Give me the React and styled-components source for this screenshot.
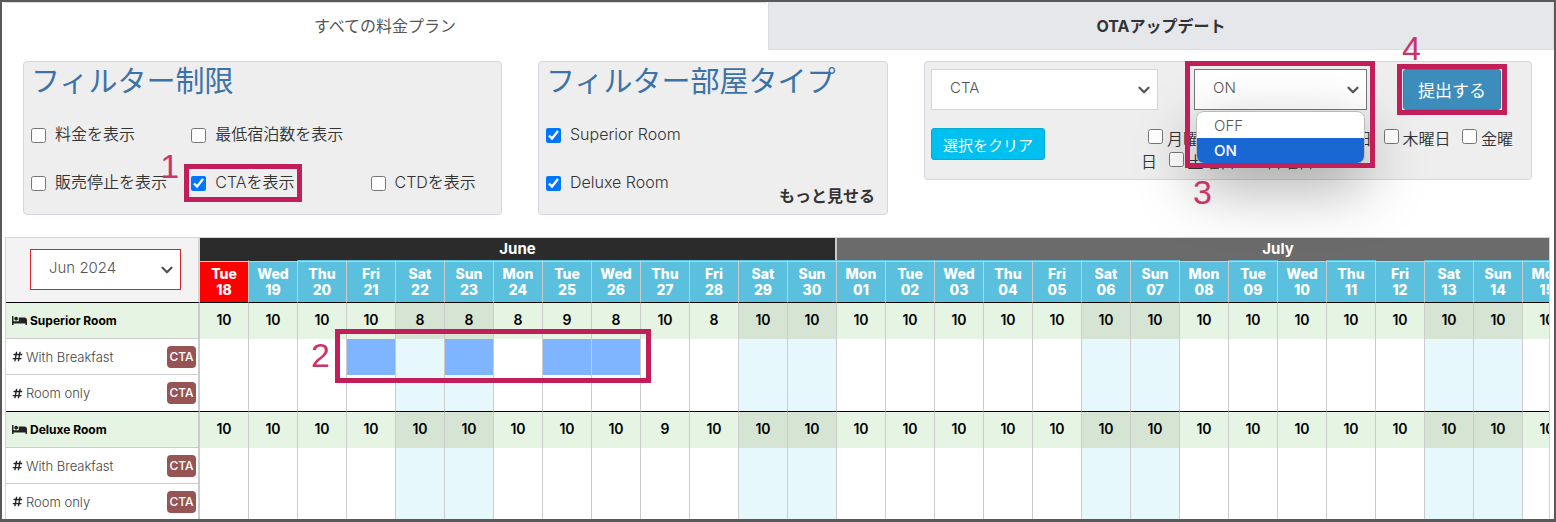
import React, { useState } from "react";
import styled, { createGlobalStyle, css } from "styled-components";
import { FaBed, FaHashtag } from "react-icons/fa";
import { ChevronDown } from "lucide-react";

const WEEKDAYS = ["Mon", "Tue", "Wed", "Thu", "Fri", "Sat", "Sun"];

// 18 Jun 2024 is a Tuesday
const days = Array.from({ length: 31 }, (_, i) => {
  const inJune = i < 13;
  const weekday = WEEKDAYS[(i + 1) % 7];
  return {
    id: i,
    weekday,
    month: inJune ? "June" : "July",
    date: String(inJune ? 18 + i : i - 12).padStart(2, "0"),
    weekend: weekday === "Sat" || weekday === "Sun",
    today: i === 0,
    flat: [0, 1, 20, 22, 24].includes(i),
  };
});

const rooms = [
  {
    name: "Superior Room",
    available: { 4: 8, 5: 8, 6: 8, 7: 9, 8: 8, 10: 8 },
    plans: [
      { name: "With Breakfast", selected: [3, 5, 7, 8], marked: true },
      { name: "Room only", selected: [] },
    ],
  },
  {
    name: "Deluxe Room",
    available: { 9: 9 },
    plans: [
      { name: "With Breakfast", selected: [] },
      { name: "Room only", selected: [] },
    ],
  },
];

const restrictions = [
  { id: "rate", label: "料金を表示" },
  { id: "minstay", label: "最低宿泊数を表示" },
  { id: "stop", label: "販売停止を表示", newRow: true },
  { id: "cta", label: "CTAを表示", checked: true },
  { id: "ctd", label: "CTDを表示" },
];

const weekdayFilters = [
  "月曜日",
  "火曜日",
  "水曜日",
  "木曜日",
  "金曜日",
  "土曜日",
  "日曜日",
];

function Marker({ number, ...rest }) {
  return (
    <MarkerBox aria-hidden="true" {...rest}>
      <span>{number}</span>
    </MarkerBox>
  );
}

function SelectField({ label, options, children, ...rest }) {
  return (
    <SelectWrap $grow={rest.$grow}>
      <Select aria-label={label} {...rest}>
        {options.map((option) => (
          <option key={option}>{option}</option>
        ))}
      </Select>
      <ChevronDown size={18} strokeWidth={3} />
      {children}
    </SelectWrap>
  );
}

function Option({ id, label, defaultChecked, children }) {
  return (
    <OptionCell>
      <OptionLabel htmlFor={id}>
        <input type="checkbox" id={id} defaultChecked={defaultChecked} />
        {label}
      </OptionLabel>
      {children}
    </OptionCell>
  );
}

function RateTable() {
  return (
    <TableWrap>
      <Table>
        <colgroup>
          <col className="names" />
          {days.map((day) => (
            <col key={day.id} className="day" />
          ))}
        </colgroup>
        <thead>
          <tr>
            <CornerCell rowSpan={2}>
              <SelectField
                label="month"
                options={["Jun 2024", "Jul 2024"]}
                $border="#d9232a"
              />
            </CornerCell>
            <MonthCell colSpan={13} $last>
              June
            </MonthCell>
            <MonthCell colSpan={18} $july>
              July
            </MonthCell>
          </tr>
          <tr>
            {days.map((day) => (
              <DayCell
                key={day.id}
                $today={day.today}
                $flat={day.flat}
                $july={day.month === "July"}
              >
                {day.weekday}
                <br />
                {day.date}
              </DayCell>
            ))}
          </tr>
        </thead>
        {rooms.map((room) => (
          <tbody key={room.name}>
            <tr>
              <NameCell $room>
                <NameRow>
                  <FaBed size={15} />
                  {room.name}
                </NameRow>
              </NameCell>
              {days.map((day) => (
                <CountCell key={day.id} $weekend={day.weekend}>
                  {room.available[day.id] || 10}
                </CountCell>
              ))}
            </tr>
            {room.plans.map((plan) => (
              <tr key={plan.name}>
                <NameCell>
                  <NameRow>
                    <FaHashtag size={11} />
                    {plan.name}
                    <Badge>CTA</Badge>
                  </NameRow>
                </NameCell>
                {days.map((day) => (
                  <PlanCell
                    key={day.id}
                    $weekend={day.weekend}
                    $selected={plan.selected.includes(day.id)}
                  >
                    {plan.marked && day.id === 3 && (
                      <Marker
                        number={2}
                        $inset="-10px calc(-500% - 16px) -8px -12px"
                        $left={-29}
                        $top={4}
                      />
                    )}
                  </PlanCell>
                ))}
              </tr>
            ))}
          </tbody>
        ))}
      </Table>
    </TableWrap>
  );
}

function App() {
  const [value, setValue] = useState("ON");

  return (
    <Frame>
      <GlobalStyle />
      <Tabs>
        <Tab type="button" $active>
          すべての料金プラン
        </Tab>
        <Tab type="button">OTAアップデート</Tab>
      </Tabs>

      <Filters>
        <Panel>
          <Title>フィルター制限</Title>
          <OptionGrid>
            {restrictions.map((item) => (
              <React.Fragment key={item.id}>
                {item.newRow && <span />}
                <Option
                  id={item.id}
                  label={item.label}
                  defaultChecked={item.checked}
                >
                  {item.checked && (
                    <Marker
                      number={1}
                      $inset="-7px -7px"
                      $left={-29}
                      $top={-20}
                    />
                  )}
                </Option>
              </React.Fragment>
            ))}
          </OptionGrid>
        </Panel>

        <Panel>
          <Title>フィルター部屋タイプ</Title>
          <RoomOptions>
            <RoomList>
              {rooms.map((room) => (
                <Option
                  key={room.name}
                  id={room.name}
                  label={room.name}
                  defaultChecked
                />
              ))}
            </RoomList>
            <MoreLink href="#more">もっと見せる</MoreLink>
          </RoomOptions>
        </Panel>

        <UpdatePanel>
          <UpdateRow>
            <SelectField
              label="restriction"
              options={["CTA", "CTD"]}
              $grow={227}
            />
            <SelectField
              label="value"
              options={["OFF", "ON"]}
              value={value}
              onChange={(e) => setValue(e.target.value)}
              $grow={173}
              $border="#767676"
            >
              <Menu role="listbox" aria-label="value options">
                {["OFF", "ON"].map((item) => (
                  <MenuItem
                    key={item}
                    role="option"
                    aria-selected={item === value}
                    $active={item === value}
                    onClick={() => setValue(item)}
                  >
                    {item}
                  </MenuItem>
                ))}
              </Menu>
              <Marker
                number={3}
                $inset="-8px -8px -58px -9px"
                $left={3}
                $top={109}
              />
            </SelectField>
            <SubmitWrap>
              <SubmitButton type="submit">提出する</SubmitButton>
              <Marker number={4} $inset="-5px -6px" $left={0} $top={-38} />
            </SubmitWrap>
          </UpdateRow>
          <ClearRow>
            <ClearButton type="button">選択をクリア</ClearButton>
            <DayFilters>
              {weekdayFilters.map((name) => (
                <React.Fragment key={name}>
                  <label>
                    <input type="checkbox" />
                    {name}
                  </label>{" "}
                </React.Fragment>
              ))}
            </DayFilters>
          </ClearRow>
        </UpdatePanel>
      </Filters>

      <RateTable />
    </Frame>
  );
}

const GlobalStyle = createGlobalStyle`
  * {
    box-sizing: border-box;
  }
  body {
    margin: 0;
    background: #fff;
    color: #333;
    font-family: Inter, "Noto Sans CJK JP", sans-serif;
    font-size: 16px;
    font-weight: 350;
  }
  button, select {
    font: inherit;
  }
  input[type="checkbox"] {
    width: 15px;
    height: 15px;
    margin: 0;
    flex-shrink: 0;
  }
`;

const Frame = styled.main`
  border: 2px solid #595959;
  border-bottom-width: 3px;
  overflow: hidden;
`;

const Tabs = styled.nav`
  display: grid;
  grid-template-columns: 766fr 786fr;
`;

const Tab = styled.button`
  height: 48px;
  padding: 0 0 2px;
  border: 1px solid #dcdce0;
  border-top-color: #e6e7eb;
  background: #e6e7eb;
  color: #333;
  font-weight: 700;
  ${({ $active }) =>
    $active &&
    css`
      border-color: #ddd transparent transparent;
      border-radius: 4px 4px 0 0;
      background: #fff;
      color: #555;
      font-weight: 400;
    `}
`;

const Filters = styled.section`
  display: grid;
  grid-template-columns: 479fr 350fr 608fr;
  gap: 36px;
  align-items: start;
  padding: 11px 22px 0 21px;
`;

const Panel = styled.div`
  padding: 0 7px 7px;
  border: 1px solid #d2d6de;
  border-radius: 4px;
  background: #eee;
`;

const Title = styled.h2`
  margin: 0 0 9px;
  color: #3d72a8;
  font-size: 29px;
  font-weight: 400;
  line-height: 40px;
`;

const OptionGrid = styled.div`
  display: grid;
  grid-template-columns: 161fr 180fr 124fr;

  > span {
    height: 48px;
  }
`;

const OptionCell = styled.div`
  position: relative;
  display: flex;
  justify-self: start;
  width: max-content;
  height: 24px;
  margin: 12px 0;
`;

const OptionLabel = styled.label`
  display: flex;
  align-items: center;
  gap: 9px;
  line-height: 20px;
  padding-bottom: 2px;
  white-space: nowrap;

  input {
    margin-top: 3px;
  }
`;

const RoomOptions = styled.div`
  display: flex;
  justify-content: space-between;
  align-items: flex-end;
`;

const RoomList = styled.div`
  display: flex;
  flex-direction: column;
`;

const MoreLink = styled.a`
  padding-right: 5px;
  color: #333;
  font-weight: 700;
  line-height: 22px;
  text-decoration: none;
`;

const UpdatePanel = styled(Panel)`
  padding: 7px 6px 5px;
`;

const UpdateRow = styled.div`
  display: flex;
  gap: 36px;
  padding-right: 24px;
`;

const SelectWrap = styled.div`
  position: relative;
  flex: ${({ $grow }) => $grow || 1} 1 0;
  min-width: 0;

  > svg {
    position: absolute;
    top: 12px;
    right: 5px;
    color: #555;
    pointer-events: none;
  }
`;

const Select = styled.select`
  display: block;
  width: 100%;
  height: 41px;
  padding: 0 18px 4px;
  border: 1px solid ${({ $border }) => $border || "#d2d6de"};
  border-radius: 0;
  appearance: none;
  background: #fff;
  color: #555;
  font-size: 15px;
`;

const Menu = styled.ul`
  position: absolute;
  z-index: 2;
  top: 42px;
  left: 2px;
  right: 2px;
  margin: 0;
  padding: 1px 0 0;
  border: 1px solid #bbb;
  border-radius: 8px;
  overflow: hidden;
  list-style: none;
  background: #fff;
  box-shadow: 0 22px 60px rgba(0, 0, 0, 0.35);
`;

const MenuItem = styled.li`
  padding: 0 17px;
  background: ${({ $active }) => ($active ? "#1967d2" : "#fff")};
  color: ${({ $active }) => ($active ? "#fff" : "#555")};
  font-size: 15px;
  font-weight: ${({ $active }) => ($active ? 500 : 350)};
  line-height: 25px;
  cursor: pointer;
`;

const SubmitWrap = styled.div`
  position: relative;
`;

const SubmitButton = styled.button`
  width: 98px;
  height: 41px;
  padding: 0;
  border: 1px solid #367fa9;
  border-radius: 3px;
  background: #3c8dbc;
  color: #fff;
  font-size: 17px;
  font-weight: 400;
`;

const ClearRow = styled.div`
  display: flex;
  justify-content: space-between;
  align-items: flex-start;
  margin-top: 18px;
`;

const ClearButton = styled.button`
  height: 32px;
  padding: 0 11px;
  border: 1px solid #00acd6;
  border-radius: 3px;
  background: #00c0ef;
  color: #fff;
  font-size: 15px;
  font-weight: 400;
`;

const DayFilters = styled.div`
  width: 384px;
  line-height: 23px;

  input[type="checkbox"] {
    margin: 0 4px 0 7px;
    vertical-align: 1px;
  }
`;

const MarkerBox = styled.span`
  position: absolute;
  z-index: 3;
  inset: ${({ $inset }) => $inset};
  border: 5px solid #c21e59;
  pointer-events: none;

  span {
    position: absolute;
    top: ${({ $top }) => $top}px;
    left: ${({ $left }) => $left}px;
    color: #c9356a;
    font-family: "Liberation Sans", sans-serif;
    font-size: 34px;
    font-weight: 400;
    line-height: 34px;
  }
`;

const TableWrap = styled.section`
  margin: 22px 4px 0 3px;
  border: solid #d4d4d4;
  border-width: 1px 1px 0;
  overflow: hidden;
`;

const Table = styled.table`
  width: max-content;
  table-layout: fixed;
  border-collapse: separate;
  border-spacing: 0;

  .names {
    width: 194px;
  }
  .day {
    width: 49px;
  }
  th,
  td {
    padding: 0;
  }
`;

const CornerCell = styled.th`
  && {
    padding: 0 17px 2px 24px;
  }
  border-right: 2px solid #d4d4d4;
  background: #f3f3f3;
  font-weight: 350;
  text-align: left;
`;

const MonthCell = styled.th`
  height: 22px;
  border-right: ${({ $last }) => ($last ? "2px solid #ccc" : "0")};
  background: ${({ $july }) => ($july ? "#6b6b6b" : "#2b2b2b")};
  color: #fff;
  font-size: 15px;
  font-weight: 700;
  line-height: 20px;
`;

const DayCell = styled.th`
  height: 42px;
  border-top: 1px solid
    ${({ $flat, $july }) => ($flat ? ($july ? "#6b6b6b" : "#2b2b2b") : "#5bc0de")};
  border-right: 1px solid #ccc;
  background: ${({ $today }) => ($today ? "#f00" : "#5bc0de")};
  box-shadow: inset 0 1px #ccc;
  color: #fff;
  font-size: 14px;
  font-weight: 800;
  line-height: 16px;
`;

const NameCell = styled.th`
  height: ${({ $room }) => ($room ? 37 : 36)}px;
  border-top: ${({ $room }) => ($room ? "1px solid #000" : "0")};
  border-right: 2px solid #ccc;
  border-bottom: 1px solid #ccc;
  background: ${({ $room }) => ($room ? "#e6f4e3" : "#fff")};
  color: ${({ $room }) => ($room ? "#000" : "#444")};
  font-size: ${({ $room }) => ($room ? 12 : 13)}px;
  font-weight: ${({ $room }) => ($room ? 700 : 300)};

  tr:last-child > & {
    height: 36px;
    border-bottom: 0;
  }
  tbody:last-child > tr:last-child > & {
    height: 35px;
  }
`;

const NameRow = styled.div`
  display: flex;
  align-items: center;
  gap: 3px;
  padding: 0 2px 0 6px;

  svg {
    color: #222;
  }
`;

const Badge = styled.span`
  width: 29px;
  margin-left: auto;
  border-radius: 4px;
  background: #965454;
  color: #fff;
  font-size: 12px;
  font-weight: 500;
  line-height: 22px;
  text-align: center;
`;

const CountCell = styled.td`
  border-top: 1px solid #000;
  border-right: 1px solid #ccc;
  background: ${({ $weekend }) => ($weekend ? "#d6e4d3" : "#e6f4e3")};
  color: #000;
  font-size: 14px;
  font-weight: 600;
  line-height: 16px;
  padding-bottom: 2px !important;
  text-align: center;
`;

const PlanCell = styled.td`
  position: relative;
  border-right: 1px solid #ccc;
  background: ${({ $weekend, $selected }) =>
    $selected ? "#7fb5ff" : $weekend ? "#e7f8fd" : "#fff"};
`;

export default App;
